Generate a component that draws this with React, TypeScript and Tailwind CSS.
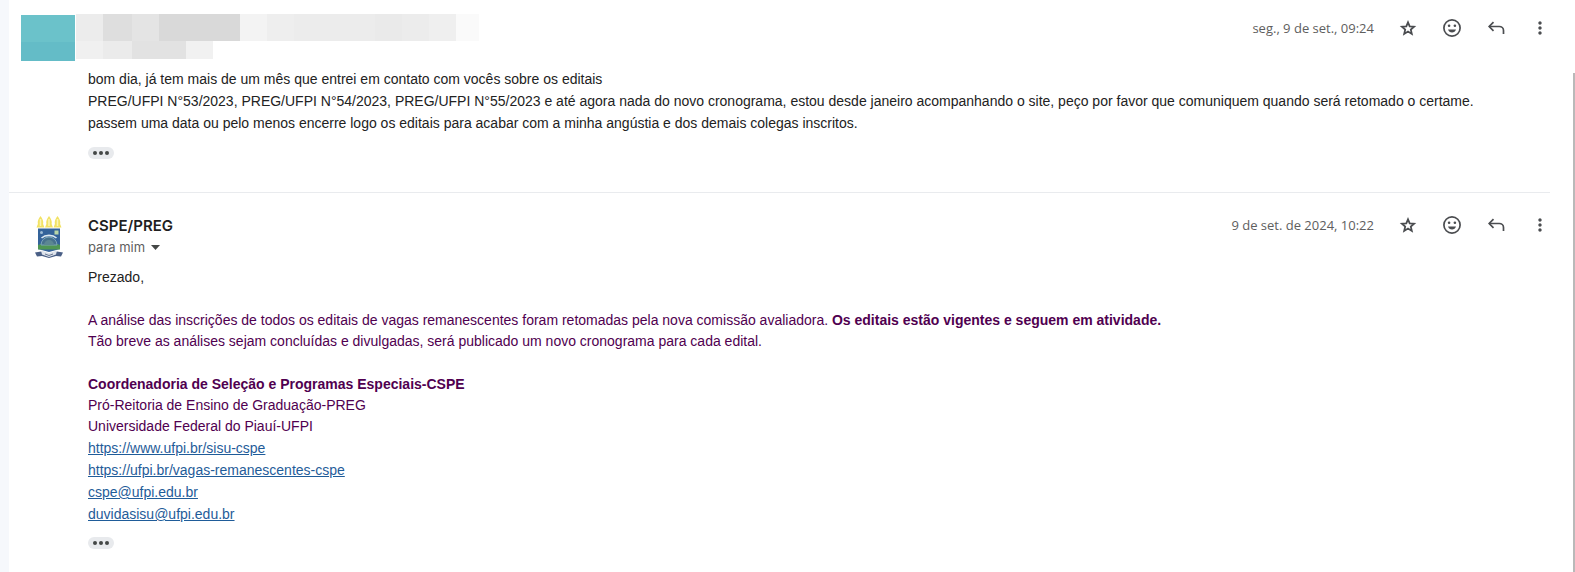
import type { ReactNode } from "react";
import { MdMoreVert } from "react-icons/md";

const senderBlocks = [
  "w-[27px] bg-[#ececec]",
  "w-[29px] bg-[#dedede]",
  "w-[27px] bg-[#e4e4e4]",
  "w-[81px] bg-[#d9d9d9]",
  "w-[27px] bg-[#f3f3f3]",
  "w-[27px] bg-[#eeeeee]",
  "w-[81px] bg-[#ececec]",
  "w-[27px] bg-[#eaeaea]",
  "w-[27px] bg-[#ececec]",
  "w-[27px] bg-[#efefef]",
  "w-[23px] bg-[#fafafa]",
];

const recipientBlocks = [
  "w-[27px] bg-[#f0f0f0]",
  "w-[29px] bg-[#ebebeb]",
  "w-[54px] bg-[#e2e2e2]",
  "w-[27px] bg-[#f1f1f1]",
];

const links = [
  { href: "https://www.ufpi.br/sisu-cspe", label: "https://www.ufpi.br/sisu-cspe" },
  { href: "https://ufpi.br/vagas-remanescentes-cspe", label: "https://ufpi.br/vagas-remanescentes-cspe" },
  { href: "mailto:cspe@ufpi.edu.br", label: "cspe@ufpi.edu.br" },
  { href: "mailto:duvidasisu@ufpi.edu.br", label: "duvidasisu@ufpi.edu.br" },
];

function StarIcon() {
  return (
    <svg viewBox="0 0 20 20" className="size-5" fill="none" stroke="currentColor" strokeWidth="1.8">
      <path d="M10 4.3l1.700 4 4.400.4-3.300 2.900 1 4.300L10 13.600l-3.800 2.300 1-4.300-3.300-2.900 4.400-.4z" />
    </svg>
  );
}

function SmileIcon() {
  return (
    <svg viewBox="0 0 20 20" className="size-5" fill="none">
      <circle cx="10" cy="10" r="8.1" stroke="currentColor" strokeWidth="1.7" />
      <circle cx="7.1" cy="7.8" r="1.3" fill="currentColor" />
      <circle cx="12.9" cy="7.8" r="1.3" fill="currentColor" />
      <path d="M6 11.4h8c-.6 1.9-2.1 3-4 3s-3.4-1.1-4-3z" fill="currentColor" />
    </svg>
  );
}

function ReplyIcon() {
  return (
    <svg viewBox="0 0 20 20" className="size-5" fill="none" stroke="currentColor" strokeWidth="1.7">
      <path d="M7.5 4.2 3.2 8.5l4.3 4.3" />
      <path d="M3.500 8.500h9.800c2.300 0 4.200 1.700 4.200 4v3.500" />
    </svg>
  );
}

function Crest() {
  return (
    <svg viewBox="0 0 28 44" className="h-11 w-7" role="img" aria-label="UFPI">
      {[5.5, 14, 22.5].map((x) => (
        <g key={x} transform={`translate(${x} 0)`}>
          <path d="M0 1c2 3 3.300 5 2.600 8L4 12.500h-8L-2.600 9C-3.300 6-2 4 0 1z" fill="#f2e264" />
          <path d="M0 4v7" stroke="#fbf5b8" strokeWidth="1.5" />
        </g>
      ))}
      <path d="M3 13.500h22v20.500l-11 3-11-3z" fill="#34639a" />
      <path d="M3 30c7-3 15-3 22 0v4.500H3z" fill="#4f9653" />
      <path d="M6 30a8 8 0 0 1 16 0z" fill="#47718c" stroke="#7da5b8" />
      <path d="M9 30a5 5 0 0 1 10 0z" fill="#5c8793" />
      <path d="M6.500 23c4-3.500 11-3.500 15 0" fill="none" stroke="#dbe8ef" strokeWidth="1.6" />
      <circle cx="6.5" cy="17.5" r="1.5" fill="#9dbbd4" />
      <rect x="19.5" y="15.5" width="4" height="4" fill="#b9d6a8" />
      <path d="M0 37.500l6-1 8 2.500 8-2.500 6 1-2 4-5-.5-7 2-7-2-5 .5z" fill="#4a5f86" />
      <path d="M6 35.500l8 2.500 8-2.500-1 4-7 2.500-7-2.500z" fill="#dde2ea" />
      <path d="M10 39l4 1.500 4-1.500" fill="none" stroke="#66758f" />
    </svg>
  );
}

function IconButton({ label, children }: { label: string; children: ReactNode }) {
  return (
    <button type="button" aria-label={label} className="flex size-5 items-center justify-center text-[#4b4d50]">
      {children}
    </button>
  );
}

function MessageActions({ date }: { date: string }) {
  return (
    <div className="flex h-5 shrink-0 items-center gap-6">
      <time className="font-['Open_Sans',sans-serif] text-[13px] text-[#5e5e5e]">{date}</time>
      <IconButton label="Com estrela">
        <StarIcon />
      </IconButton>
      <IconButton label="Adicionar reação">
        <SmileIcon />
      </IconButton>
      <IconButton label="Responder">
        <ReplyIcon />
      </IconButton>
      <IconButton label="Mais">
        <MdMoreVert size={20} />
      </IconButton>
    </div>
  );
}

function TrimmedContentButton() {
  return (
    <button
      type="button"
      aria-label="Mostrar conteúdo cortado"
      className="flex h-3 w-[26px] items-center justify-center gap-[2px] rounded-full bg-[#e8eaed]"
    >
      <span className="size-1 rounded-full bg-[#444746]" />
      <span className="size-1 rounded-full bg-[#444746]" />
      <span className="size-1 rounded-full bg-[#444746]" />
    </button>
  );
}

export default function App() {
  return (
    <div className="flex min-h-screen bg-white font-['Liberation_Sans',Arial,sans-serif]">
      <div className="w-[9px] bg-[#f6f8fc]" />
      <main className="min-w-0 flex-1 text-sm leading-[21px] text-[#222222]">
        <article className="mr-[23px] border-b border-[#e9ebee] pb-[33px]">
          <header className="flex items-start justify-between pt-[14px] pl-3">
            <div className="flex">
              <div className="mt-px mr-px h-[46px] w-[54px] border-b-[19px] border-[#64bcc7] bg-[#6bc2ca]" />
              <div>
                <div className="flex h-[27px]">
                  {senderBlocks.map((block, i) => (
                    <span key={i} className={block} />
                  ))}
                </div>
                <div className="flex h-[18px]">
                  {recipientBlocks.map((block, i) => (
                    <span key={i} className={block} />
                  ))}
                </div>
              </div>
            </div>
            <div className="pt-1">
              <MessageActions date="seg., 9 de set., 09:24" />
            </div>
          </header>
          <div className="pt-[7px] pl-[79px]">
            <p className="mb-[13px] leading-[22px]">
              bom dia, já tem mais de um mês que entrei em contato com vocês sobre os editais
              <br />
              PREG/UFPI N°53/2023, PREG/UFPI N°54/2023, PREG/UFPI N°55/2023 e até agora nada do novo cronograma, estou
              desde janeiro acompanhando o site, peço por favor que comuniquem quando será retomado o certame.
              <br />
              passem uma data ou pelo menos encerre logo os editais para acabar com a minha angústia e dos demais
              colegas inscritos.
            </p>
            <TrimmedContentButton />
          </div>
        </article>

        <article className="mr-[23px] pb-4">
          <header className="flex items-start pt-[22px]">
            <div className="flex w-[79px] justify-center">
              <Crest />
            </div>
            <div className="flex-1">
              <h2 className="font-[Inter,sans-serif] text-[15px] leading-[22px] font-semibold text-[#1f1f1f]">
                CSPE/PREG
              </h2>
              <button
                type="button"
                className="flex items-center gap-[6px] font-[Inter,sans-serif] text-[13px] leading-[21px] text-[#5e5e5e]"
              >
                para mim
                <svg viewBox="0 0 9 5" className="h-[5px] w-[9px]" fill="#444746">
                  <path d="M0 0h9L4.500 5z" />
                </svg>
              </button>
            </div>
            <MessageActions date="9 de set. de 2024, 10:22" />
          </header>
          <div className="pt-2 pl-[79px] text-[#500050]">
            <p className="mb-[22px] text-[#222222]">Prezado,</p>
            <p className="mb-[22px]">
              A análise das inscrições de todos os editais de vagas remanescentes foram retomadas pela nova comissão
              avaliadora. <b>Os editais estão vigentes e seguem em atividade.</b>
              <br />
              Tão breve as análises sejam concluídas e divulgadas, será publicado um novo cronograma para cada edital.
            </p>
            <p>
              <b>Coordenadoria de Seleção e Programas Especiais-CSPE</b>
              <br />
              Pró-Reitoria de Ensino de Graduação-PREG
              <br />
              Universidade Federal do Piauí-UFPI
            </p>
            <ul className="mb-3 leading-[22px] text-[#1f5c99]">
              {links.map((link) => (
                <li key={link.href}>
                  <a href={link.href} className="underline">
                    {link.label}
                  </a>
                </li>
              ))}
            </ul>
            <TrimmedContentButton />
          </div>
        </article>
      </main>
      <div className="mt-[73px] w-[2px] bg-[#b9b9b9]" />
    </div>
  );
}
